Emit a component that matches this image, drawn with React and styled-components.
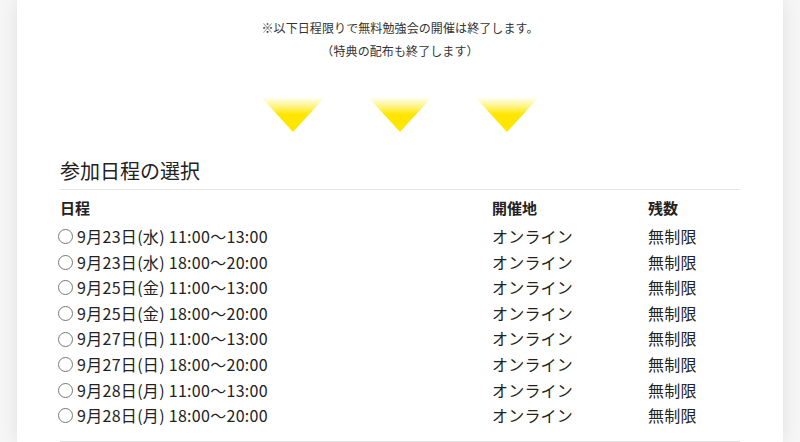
import React from "react";
import styled, { createGlobalStyle } from "styled-components";

const GlobalStyle = createGlobalStyle`
  html, body {
    margin: 0;
    padding: 0;
    background: #f6f6f6;
    font-family: "Noto Sans CJK JP", "Noto Sans", sans-serif;
    color: #333;
  }
`;

const Card = styled.div`
  margin: 0 17px;
  min-height: 442px;
  background: #fff;
  box-shadow: 0 0 18px rgba(0, 0, 0, 0.09);
  padding: 16px 43px 0;
  box-sizing: border-box;
`;

const Notice = styled.p`
  margin: 0;
  text-align: center;
  font-size: 12px;
  line-height: 23px;
  letter-spacing: 0.1px;
  color: #333;
`;

const Arrows = styled.div`
  display: flex;
  justify-content: center;
  gap: 43px;
  margin-top: 35px;
`;

const Arrow = styled.div`
  width: 64px;
  height: 35px;
  clip-path: polygon(0 0, 100% 0, 50% 100%);
  background: linear-gradient(
    to bottom,
    rgba(255, 232, 0, 0) 0%,
    rgba(255, 232, 0, 0.45) 25%,
    #ffe600 50%,
    #ffe600 100%
  );
`;

const Heading = styled.h2`
  margin: 24px 0 0;
  padding-bottom: 3px;
  font-size: 20px;
  font-weight: 400;
  line-height: 30px;
  color: #222;
  border-bottom: 1px solid #e6e6e6;
`;

const Table = styled.div`
  display: grid;
  grid-template-columns: 432px 156px 1fr;
  padding: 6px 0 12px;
  border-bottom: 1px solid #e0e0e0;
`;

const Head = styled.div`
  font-size: 15px;
  font-weight: 700;
  line-height: 24px;
  color: #222;
  padding-bottom: 4px;
`;

const Cell = styled.div`
  display: flex;
  align-items: center;
  font-size: 16px;
  line-height: 25.6px;
  letter-spacing: ${(p) => (p.$radio ? "0.3px" : "0.2px")};
  color: #222;
  margin-left: ${(p) => (p.$radio ? "-2px" : "0")};
`;

const Radio = styled.span`
  display: inline-block;
  width: 13px;
  height: 13px;
  border: 1px solid #777;
  border-radius: 50%;
  margin-right: 4px;
  flex-shrink: 0;
`;

const rows = [
  "9月23日(水) 11:00〜13:00",
  "9月23日(水) 18:00〜20:00",
  "9月25日(金) 11:00〜13:00",
  "9月25日(金) 18:00〜20:00",
  "9月27日(日) 11:00〜13:00",
  "9月27日(日) 18:00〜20:00",
  "9月28日(月) 11:00〜13:00",
  "9月28日(月) 18:00〜20:00",
];

export default function App() {
  return (
    <>
      <GlobalStyle />
      <Card>
        <Notice>※以下日程限りで無料勉強会の開催は終了します。</Notice>
        <Notice>（特典の配布も終了します）</Notice>
        <Arrows>
          <Arrow />
          <Arrow />
          <Arrow />
        </Arrows>
        <Heading>参加日程の選択</Heading>
        <Table>
          <Head>日程</Head>
          <Head>開催地</Head>
          <Head>残数</Head>
          {rows.map((r) => (
            <React.Fragment key={r}>
              <Cell $radio>
                <Radio />
                {r}
              </Cell>
              <Cell>オンライン</Cell>
              <Cell>無制限</Cell>
            </React.Fragment>
          ))}
        </Table>
      </Card>
    </>
  );
}
